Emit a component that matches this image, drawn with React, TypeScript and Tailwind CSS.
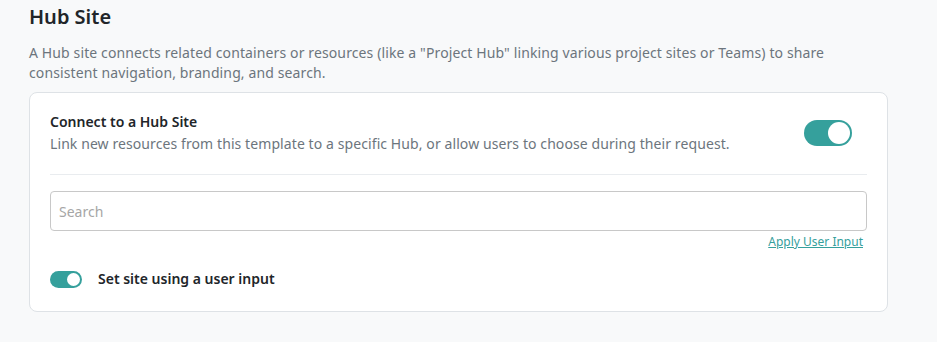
import { useState } from "react";

const Toggle = ({ on, onClick, small }: { on: boolean; onClick: () => void; small?: boolean }) => {
  return (
    <button
      onClick={onClick}
      className={`${small ? "w-[32px] h-[17px]" : "w-[48px] h-[26px]"} ${
        on ? "bg-[#35a09c] justify-end" : "bg-[#ced4da] justify-start"
      } flex items-center rounded-full p-[2px] shrink-0`}
      aria-label="Toggle"
    >
      <span className={`${small ? "w-[13px] h-[13px]" : "w-[22px] h-[22px]"} block rounded-full bg-white`} />
    </button>
  );
};

export default function App() {
  const [connect, setConnect] = useState(true);
  const [userInput, setUserInput] = useState(true);

  return (
    <div className="min-h-screen bg-[#f8f9fa] pl-[29px] pr-[49px] pt-[3px] font-['Noto_Sans',sans-serif]">
      {/* Header */}
      <h2 className="text-[20px] leading-[28px] font-semibold text-[#212529]">Hub Site</h2>
      <p className="mt-[12px] max-w-[820px] text-[14px] leading-[20px] tracking-[0.12px] text-[#6c757d]">
        A Hub site connects related containers or resources (like a "Project Hub" linking various project sites or Teams) to share
        consistent navigation, branding, and search.
      </p>

      {/* Card */}
      <div className="mt-[9px] bg-white border border-[#dee2e6] rounded-lg px-[20px] pt-[19px] pb-[22px]">
        <div className="flex items-center justify-between pb-[20px] border-b border-[#e9ecef]">
          <div>
            <div className="text-[14px] leading-[20px] font-semibold text-[#212529]">Connect to a Hub Site</div>
            <div className="mt-[2px] text-[14px] leading-[20px] tracking-[0.09px] text-[#6c757d]">
              Link new resources from this template to a specific Hub, or allow users to choose during their request.
            </div>
          </div>
          <div className="mr-[15px]">
            <Toggle on={connect} onClick={() => setConnect(!connect)} />
          </div>
        </div>

        <input
          placeholder="Search"
          className="mt-[16px] block w-full h-[40px] border border-[#c8c8c8] rounded px-[8px] text-[14px] text-[#212529] placeholder:text-[#a6a6a6] outline-none"
        />
        <div className="flex justify-end mt-[3px] pr-[4px]">
          <a href="#" className="text-[12px] leading-[16px] text-[#35a09c] underline">
            Apply User Input
          </a>
        </div>

        <div className="flex items-center gap-[16px] mt-[19px]">
          <Toggle small on={userInput} onClick={() => setUserInput(!userInput)} />
          <span className="text-[14px] leading-[20px] font-semibold text-[#212529]">Set site using a user input</span>
        </div>
      </div>
    </div>
  );
}
